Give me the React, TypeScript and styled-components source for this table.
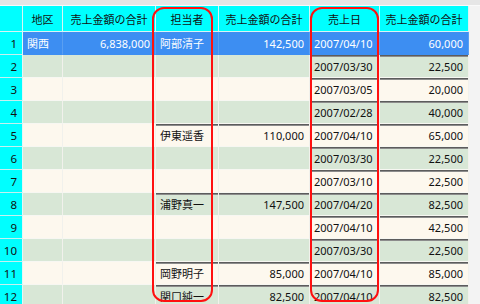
import React from 'react';
import styled, {createGlobalStyle, css} from 'styled-components';

const GlobalStyle = createGlobalStyle`
html, body {
margin: 0;
padding: 0;
background: #f3f3f3;
overflow: hidden;
}
`;

const Sheet = styled.div`
position: relative;
width: 480px;
height: 304px;
overflow: hidden;
font-family: "Noto Sans", "Noto Sans CJK JP", sans-serif;
font-size: 11px;
color: #111;
`;

const TopStrip = styled.div`
height: 5px;
background: #e6e6e6;
border-bottom: 1px solid #fafafa;
`;

const Grid = styled.div`
display: grid;
width: 469px;
grid-template-columns: 23px 40px 93px 63px 91px 70px 89px;
grid-template-rows: 26px;
grid-auto-rows: 23px;
`;

const HeaderCell = styled.div`
box-sizing: border-box;
background: #00ffff;
border-right: 1px solid #d8f4f4;
border-bottom: 1px solid #d8f4f4;
display: flex;
align-items: center;
justify-content: center;
white-space: nowrap;
padding-top: 1px;
`;

const RowNum = styled.div`
box-sizing: border-box;
background: #00ffff;
border-right: 1px solid #e4f6f6;
border-bottom: 1px solid #c6f0f0;
display: flex;
align-items: center;
justify-content: flex-end;
padding-right: 5px;
font-size: 11.5px;
`;

const tones = {
    sel: '#3d8ef2',
    green: '#d8e7d6',
    cream: '#fdf8ee',
};

const Cell = styled.div<{$tone: keyof typeof tones; $right?: boolean; $sep?: boolean}>`
box-sizing: border-box;
background: ${(p) => tones[p.$tone]};
color: ${(p) => (p.$tone === 'sel' ? '#ffffff' : '#111111')};
border-right: 1px solid ${(p) => (p.$tone === 'sel' ? '#5a9ff2' : '#f1f1ec')};
border-bottom: 1px solid ${(p) => (p.$tone === 'sel' ? '#3d8ef2' : '#f7f7f2')};
display: flex;
align-items: center;
justify-content: ${(p) => (p.$right ? 'flex-end' : 'flex-start')};
padding: ${(p) => (p.$right ? '0 5px 0 0' : '0 0 0 4px')};
white-space: nowrap;
${(p) => p.$sep && css`
box-shadow: inset 0 1px 0 #5c5c5c, inset 0 2px 0 #8c8c8c;
`}
`;

// red highlight drawn over a column
const RedFrame = styled.div<{$left: number; $width: number}>`
position: absolute;
top: 7px;
left: ${(p) => p.$left}px;
width: ${(p) => p.$width}px;
height: 295px;
box-sizing: border-box;
border: 2px solid #ff1010;
border-radius: 12px;
pointer-events: none;
`;

type Row = {
    area?: string;
    areaSum?: string;
    person?: string;
    personSum?: string;
    date: string;
    amount: string;
};

const rows: Row[] = [
    {area: '関西', areaSum: '6,838,000', person: '阿部清子', personSum: '142,500', date: '2007/04/10', amount: '60,000'},
    {date: '2007/03/30', amount: '22,500'},
    {date: '2007/03/05', amount: '20,000'},
    {date: '2007/02/28', amount: '40,000'},
    {person: '伊東遥香', personSum: '110,000', date: '2007/04/10', amount: '65,000'},
    {date: '2007/03/30', amount: '22,500'},
    {date: '2007/03/10', amount: '22,500'},
    {person: '浦野真一', personSum: '147,500', date: '2007/04/20', amount: '82,500'},
    {date: '2007/04/10', amount: '42,500'},
    {date: '2007/03/30', amount: '22,500'},
    {person: '岡野明子', personSum: '85,000', date: '2007/04/10', amount: '85,000'},
    {person: '関口純一', personSum: '82,500', date: '2007/04/10', amount: '82,500'},
];

const headers = ['', '地区', '売上金額の合計', '担当者', '売上金額の合計', '売上日', '売上金額の合計'];

export default function App() {
    return (
        <Sheet>
            <GlobalStyle/>
            <TopStrip/>
            <Grid>
                {headers.map((h, i) => (
                    <HeaderCell key={'h' + i}>{h}</HeaderCell>
                ))}
                {rows.map((r, i) => {
                    const tone = i === 0 ? 'sel' : (i % 2 === 1 ? 'green' : 'cream');
                    const personSep = i > 0 && Boolean(r.person);
                    const dateSep = i > 0;
                    return (
                        <React.Fragment key={i}>
                            <RowNum>{i + 1}</RowNum>
                            <Cell $tone={tone}>{r.area}</Cell>
                            <Cell
                                $tone={tone}
                                $right={true}
                            >{r.areaSum}</Cell>
                            <Cell
                                $tone={tone}
                                $sep={personSep}
                            >{r.person}</Cell>
                            <Cell
                                $tone={tone}
                                $right={true}
                                $sep={personSep}
                            >{r.personSum}</Cell>
                            <Cell
                                $tone={tone}
                                $sep={dateSep}
                            >{r.date}</Cell>
                            <Cell
                                $tone={tone}
                                $right={true}
                                $sep={dateSep}
                            >{r.amount}</Cell>
                        </React.Fragment>
                    );
                })}
            </Grid>
            <RedFrame
                $left={152}
                $width={61}
            />
            <RedFrame
                $left={310}
                $width={69}
            />
        </Sheet>
    );
}
